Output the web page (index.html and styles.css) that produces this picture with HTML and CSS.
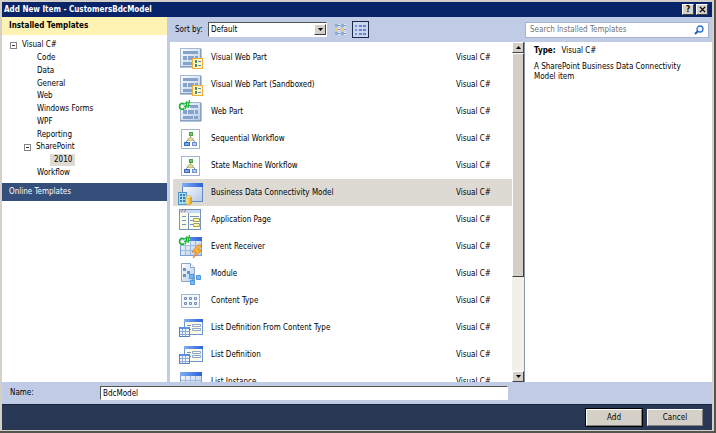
FILE: index.html
```html
<!DOCTYPE html>
<html lang="en">
  <head>
    <meta charset="utf-8">
    <title>Add New Item - CustomersBdcModel</title>
    <link rel="stylesheet" href="styles.css">
  </head>

  <body>
    <svg class="sprite" aria-hidden="true">
      <defs>
        <linearGradient id="pane" x1="0" y1="0" x2="1" y2="1">
          <stop offset="0" stop-color="#ffffff"/>
          <stop offset="1" stop-color="#b4c9e6"/>
        </linearGradient>
        <linearGradient id="bar" x1="0" y1="0" x2="1" y2="0">
          <stop offset="0" stop-color="#82aef5"/>
          <stop offset="1" stop-color="#2a62d8"/>
        </linearGradient>
        <linearGradient id="gold" x1="0" y1="0" x2="1" y2="0">
          <stop offset="0" stop-color="#fff0a0"/>
          <stop offset="1" stop-color="#e8a51c"/>
        </linearGradient>
      </defs>

      <symbol id="form" viewBox="0 0 26 24">
        <rect x="2.5" y="2.5" width="20" height="18" fill="url(#pane)" stroke="#a3b8d3"/>
        <path d="M2 21h21V3" fill="none" stroke="#6a88ac"/>
        <path d="M5 5h15v3H5zM5 10h4v4H5zM10 10h6v4h-6zM17 10h3v4h-3zM5 16h10v3H5zM16 16h4v3h-4z" fill="#86a3cb"/>
      </symbol>
      <symbol id="csharp" viewBox="0 0 26 24">
        <path d="M6.500 4.500C4 2.500 1.500 4 1.500 6.500S4 10 6.500 8.500" fill="none" stroke="#12b52a" stroke-width="1.600"/>
        <path d="M9 1L7.500 9M11.500 0L10 8M6.500 3.500L12.500 2.500M6 6.500L12 5.500" stroke="#12b52a" stroke-width="1.200"/>
      </symbol>
      <symbol id="visual-part" viewBox="0 0 26 24">
        <use href="#form"/>
        <rect x="14.500" y="12.500" width="10" height="10" fill="#fff7cf" stroke="#efae32"/>
        <path d="M17 14h2v3h-2zM17 18h2v3h-2z" fill="#4a8f4f"/>
        <path d="M20 15.500h3M20 19.500h3" stroke="#6482ac"/>
      </symbol>
      <symbol id="web-part" viewBox="0 0 26 24">
        <use href="#form"/>
        <path d="M1 0h11v9H1z" fill="#fff" opacity=".7"/>
        <use href="#csharp"/>
      </symbol>
      <symbol id="workflow" viewBox="0 0 26 24">
        <rect x="3.500" y="2.500" width="18" height="19" fill="#fff" stroke="#9fb4d0"/>
        <path d="M12.500 9v3M8.500 16v-2l4-2 4 2v2" fill="none" stroke="#7c8fa8"/>
        <rect x="11.500" y="5.500" width="3" height="3" fill="#77c961" stroke="#4ba548"/>
        <path d="M12.500 10l3 2-3 2-3-2z" fill="#e6dd80" stroke="#9b9b51" stroke-width=".6"/>
        <rect x="6.500" y="15.500" width="5" height="3" fill="#75a5ef" stroke="#3c68bb"/>
        <rect x="14.500" y="15.500" width="4" height="3" fill="#b9cff5" stroke="#6f8eca"/>
      </symbol>
      <symbol id="bdc" viewBox="0 0 26 24">
        <rect x="4.500" y="2.500" width="20" height="18" fill="url(#pane)" stroke="#6187c8"/>
        <path d="M4 2h21v4H4z" fill="url(#bar)"/>
        <rect x=".500" y="11.500" width="8" height="12" fill="#a9dcf5" stroke="#4c99c9"/>
        <path d="M2 13h2v2H2zM5 13h2v2H5zM2 16h2v2H2zM5 16h2v2H5zM2 19h2v2H2zM5 19h2v2H5z" fill="#377fb7"/>
        <path d="M7.500 16v6c0 2 6 2 6 0v-6" fill="url(#gold)" stroke="#c98d1c" stroke-width=".7"/>
        <ellipse cx="10.500" cy="16" rx="3" ry="1.300" fill="#fff2a9" stroke="#d2982a" stroke-width=".7"/>
      </symbol>
      <symbol id="page" viewBox="0 0 26 24">
        <rect x="1.500" y="1.500" width="21" height="20" fill="#f8fbea" stroke="#7493bf"/>
        <path d="M2 2h20v3H2z" fill="#c6d9f1"/>
        <path d="M3 4l2-2M6 4l2-2" stroke="#d0604d"/>
        <path d="M10.500 5v16M4 8.500h4M4 12.500h4M4 16.500h4M12 8.500h9M12 12.500h4M12 16.500h4" stroke="#7593bc"/>
        <path d="M15.500 10.500h6v3h-6zM15.500 15.500h6v3h-6z" fill="#fff4a2" stroke="#a1a45f"/>
      </symbol>
      <symbol id="table" viewBox="0 0 26 24">
        <rect x="2.500" y="2.500" width="21" height="18" fill="url(#pane)" stroke="#7da0db"/>
        <path d="M2 2h22v4H2z" fill="url(#bar)"/>
        <path d="M7.500 6v14M12.500 6v14M17.500 6v14M3 10.500h20M3 15.500h20" stroke="#9fbae0"/>
      </symbol>
      <symbol id="event" viewBox="0 0 26 24">
        <use href="#table"/>
        <path d="M1 0h11v10H1z" fill="#fff" opacity=".7"/>
        <use href="#csharp"/>
        <path d="M20 10l-6 7h4l-3 6 9-8h-4l4-5z" fill="#ffb82e" stroke="#dc6c18" stroke-width=".7"/>
      </symbol>
      <symbol id="module" viewBox="0 0 26 24">
        <path d="M3.500 1.500h9l4 4v14h-13z" fill="url(#pane)" stroke="#8da7c9"/>
        <path d="M12.500 1.500v4h4" fill="#fff" stroke="#8da7c9"/>
        <path d="M5 6h3v3H5zM9 9h3v3H9zM5 12h3v3H5z" fill="#5b95d9"/>
        <path d="M13 16h4M15 15v4" fill="none" stroke="#4d89c8"/>
        <path d="M11.500 12.500h4v4h-4zM18.500 13.500h4v4h-4zM12.500 18.500h4v4h-4z" fill="#70bdf3" stroke="#4f97dc"/>
      </symbol>
      <symbol id="content-type" viewBox="0 0 26 24">
        <rect x="3.500" y="5.500" width="18" height="13" fill="#f3f7fc" stroke="#a3b6cf"/>
        <path d="M6.500 8.500h2v2h-2zM11.500 8.500h2v2h-2zM16.500 8.500h2v2h-2zM6.500 13.500h2v2h-2zM11.500 13.500h2v2h-2zM16.500 13.500h2v2h-2z" fill="#d5e3f6" stroke="#748eb3"/>
      </symbol>
      <symbol id="list-def" viewBox="0 0 26 24">
        <rect x="6.500" y="3.500" width="18" height="15" fill="#fbfbe4" stroke="#6e95d3"/>
        <path d="M6 3h19v3H6z" fill="url(#bar)"/>
        <path d="M9 9.500h4M9 13.500h4" stroke="#728fb7"/>
        <path d="M14.500 8.500h8v2h-8zM14.500 12.500h8v2h-8z" fill="#fff" stroke="#8ba6c8"/>
        <rect x="1.500" y="11.500" width="10" height="9" fill="#eef5ff" stroke="#5b80bb"/>
        <path d="M2 11h9v2H2z" fill="#5e92e4"/>
        <path d="M4.500 13v7M7.500 13v7M2 15.500h9M2 18.500h9" stroke="#8dabd5"/>
      </symbol>
    </svg>

    <main class="dialog">
      <header class="titlebar">
        <h1>Add New Item - CustomersBdcModel</h1>
        <button class="caption-btn" aria-label="Help">?</button>
        <button class="caption-btn" aria-label="Close"><svg viewBox="0 0 8 8"><path d="M1 1l6 6M7 1L1 7" stroke="#000" stroke-width="1.500"/></svg></button>
      </header>

      <div class="content">
        <nav class="sidebar">
          <h2>Installed Templates</h2>
          <ul class="tree">
            <li><button class="toggle" aria-label="Collapse Visual C#"></button>Visual C#</li>
            <li class="level-2">Code</li>
            <li class="level-2">Data</li>
            <li class="level-2">General</li>
            <li class="level-2">Web</li>
            <li class="level-2">Windows Forms</li>
            <li class="level-2">WPF</li>
            <li class="level-2">Reporting</li>
            <li class="level-1"><button class="toggle" aria-label="Collapse SharePoint"></button>SharePoint</li>
            <li class="level-3"><span class="current">2010</span></li>
            <li class="level-2">Workflow</li>
          </ul>
          <button class="online">Online Templates</button>
        </nav>

        <div class="workspace">
          <div class="toolbar">
            <label for="sort">Sort by:</label>
            <div class="select">
              <select id="sort"><option>Default</option></select>
              <span class="arrow-btn"><svg viewBox="0 0 5 3"><path d="M0 0h5L2.500 3z"/></svg></span>
            </div>
            <button class="view-btn" aria-label="Small icons">
              <svg viewBox="0 0 12 12"><path d="M0 0h3v3H0zM6 0h3v3H6zM0 8h3v3H0zM6 8h3v3H6z" fill="#8caedd"/><path d="M0 4h3v3H0zM6 4h3v3H6z" fill="#efca62"/><path d="M3 0h2v3H3zM3 4h2v3H3zM3 8h2v3H3zM9 0h2v3H9zM9 4h2v3H9zM9 8h2v3H9z" fill="#e9eefa"/><path d="M3 1.500h2M3 5.500h2M3 9.500h2M9 1.500h2M9 5.500h2M9 9.500h2" stroke="#6c8fc5"/></svg>
            </button>
            <button class="view-btn active" aria-label="Medium icons">
              <svg viewBox="0 0 12 12"><path d="M0 1h2v2H0zM0 5h2v2H0zM0 9h2v2H0z" fill="#7194da"/><path d="M4 1h3v2H4zM8 1h3v2H8zM4 5h3v2H4zM8 5h3v2H8zM4 9h3v2H4zM8 9h3v2H8z" fill="#6686c9"/></svg>
            </button>
            <div class="search">
              <input type="text" placeholder="Search Installed Templates" aria-label="Search Installed Templates">
              <svg viewBox="0 0 10 10"><circle cx="6" cy="4" r="3" fill="#eef6ff" stroke="#2d70d2" stroke-width="1.300"/><path d="M4 6L1 9" stroke="#2459b9" stroke-width="2"/></svg>
            </div>
          </div>

          <div class="panes">
            <div class="list-pane">
              <ul class="templates">
                <li><svg><use href="#visual-part"/></svg><span>Visual Web Part</span><span>Visual C#</span></li>
                <li><svg><use href="#visual-part"/></svg><span>Visual Web Part (Sandboxed)</span><span>Visual C#</span></li>
                <li><svg><use href="#web-part"/></svg><span>Web Part</span><span>Visual C#</span></li>
                <li><svg><use href="#workflow"/></svg><span>Sequential Workflow</span><span>Visual C#</span></li>
                <li><svg><use href="#workflow"/></svg><span>State Machine Workflow</span><span>Visual C#</span></li>
                <li class="selected"><svg><use href="#bdc"/></svg><span>Business Data Connectivity Model</span><span>Visual C#</span></li>
                <li><svg><use href="#page"/></svg><span>Application Page</span><span>Visual C#</span></li>
                <li><svg><use href="#event"/></svg><span>Event Receiver</span><span>Visual C#</span></li>
                <li><svg><use href="#module"/></svg><span>Module</span><span>Visual C#</span></li>
                <li><svg><use href="#content-type"/></svg><span>Content Type</span><span>Visual C#</span></li>
                <li><svg><use href="#list-def"/></svg><span>List Definition From Content Type</span><span>Visual C#</span></li>
                <li><svg><use href="#list-def"/></svg><span>List Definition</span><span>Visual C#</span></li>
                <li><svg><use href="#table"/></svg><span>List Instance</span><span>Visual C#</span></li>
              </ul>
              <div class="scrollbar">
                <button class="arrow-btn" aria-label="Scroll up"><svg viewBox="0 0 5 3"><path d="M0 3h5L2.500 0z"/></svg></button>
                <div class="thumb"></div>
                <div class="track"></div>
                <button class="arrow-btn" aria-label="Scroll down"><svg viewBox="0 0 5 3"><path d="M0 0h5L2.500 3z"/></svg></button>
              </div>
            </div>
            <aside class="details">
              <p><strong>Type:</strong>Visual C#</p>
              <p>A SharePoint Business Data Connectivity Model item</p>
            </aside>
          </div>
        </div>
      </div>

      <div class="name-row">
        <label for="name">Name:</label>
        <input id="name" type="text" value="BdcModel" autofocus>
      </div>

      <footer class="actions">
        <button class="default">Add</button>
        <button>Cancel</button>
      </footer>
    </main>
  </body>
</html>
```

FILE: styles.css
```css
* {
  box-sizing: border-box;
}
body {
  margin: 0;
  padding: 0 2px 2px 0;
  background: #55554f;
  font: 8px/12px "DejaVu Sans Condensed", "Open Sans", sans-serif;
  color: #000;
}
h1, h2, p, ul {
  margin: 0;
  padding: 0;
  font-size: inherit;
  list-style: none;
}
button, input, select {
  margin: 0;
  padding: 0;
  font: inherit;
  color: inherit;
}
.sprite {
  position: absolute;
  width: 0;
  height: 0;
}
.dialog {
  display: flex;
  flex-direction: column;
  height: calc(100vh - 2px);
  border: 2px solid #d4d0c8;
  border-bottom-width: 1px;
  background: #c0cce6;
}

/* title bar */
.titlebar {
  display: flex;
  align-items: center;
  gap: 2px;
  height: 15px;
  padding: 0 4px 0 2px;
  background: #0a246a;
  color: #fff;
}
.titlebar h1 {
  flex: 1;
}
.caption-btn,
.arrow-btn {
  display: flex;
  align-items: center;
  justify-content: center;
  width: 12px;
  height: 11px;
  border: 1px solid;
  border-color: #fff #404040 #404040 #fff;
  background: #d4d0c8;
  color: #000;
  font-weight: bold;
}
.caption-btn svg {
  width: 7px;
  height: 7px;
}
.arrow-btn svg {
  width: 5px;
  height: 3px;
}

.content {
  display: flex;
  flex: 1;
  min-height: 0;
}

/* left tree */
.sidebar {
  flex: 0 0 165px;
  background: #fff;
}
.sidebar h2 {
  height: 18px;
  padding: 3px 7px;
  background: #fff3b3;
}
.tree {
  display: flex;
  flex-direction: column;
  height: 144px;
  padding: 4px 0 0 8px;
}
.tree li {
  display: flex;
  flex: 1;
  align-items: center;
  gap: 5px;
}
.tree .level-1 {
  padding-left: 14px;
}
.tree .level-2 {
  padding-left: 27px;
}
.tree .level-3 {
  padding-left: 40px;
}
.toggle {
  width: 7px;
  height: 7px;
  border: 1px solid #848484;
  background: linear-gradient(#333, #333) center / 3px 1px no-repeat #fff;
}
.current {
  padding: 0 3px 0 4px;
  background: #dddad4;
}
.online {
  display: block;
  width: 100%;
  height: 18px;
  margin-top: 4px;
  padding: 0 7px;
  border: 0;
  background: #344f7c;
  color: #fff;
  text-align: left;
}

/* toolbar */
.workspace {
  display: flex;
  flex: 1;
  flex-direction: column;
  min-width: 0;
  padding-left: 3px;
}
.toolbar {
  display: flex;
  align-items: center;
  height: 25px;
  padding: 0 3px 0 5px;
}
.toolbar label {
  width: 33px;
}
.select {
  display: flex;
  align-items: center;
  width: 119px;
  height: 15px;
  margin-right: 5px;
  border: 1px solid;
  border-color: #55554f #fff #fff #55554f;
  background: #fff;
}
.select select {
  flex: 1;
  padding-left: 2px;
  border: 0;
  background: #fff;
  appearance: none;
}
.view-btn {
  display: flex;
  align-items: center;
  justify-content: center;
  width: 17px;
  height: 17px;
  margin-right: 3px;
  border: 0;
  background: none;
}
.view-btn.active {
  border: 1px solid #1c2a48;
  background: #c9d6ee;
}
.view-btn svg {
  flex: none;
  width: 12px;
  height: 12px;
}
.search {
  display: flex;
  align-items: center;
  width: 184px;
  height: 16px;
  margin-left: auto;
  padding: 0 4px;
  border: 1px solid #a5b3d0;
  background: #fff;
}
.search input {
  flex: 1;
  min-width: 0;
  border: 0;
}
.search input::placeholder {
  color: #717171;
}
.search svg {
  width: 10px;
  height: 10px;
}

/* template list */
.panes {
  display: flex;
  flex: 1;
  min-height: 0;
  background: #fff;
}
.list-pane {
  display: flex;
  flex: 0 0 355px;
  border-right: 1px solid #8793ad;
}
.templates {
  flex: 1;
  overflow: hidden;
  padding: 2px 0 0 3px;
}
.templates li {
  display: flex;
  align-items: center;
  height: 27px;
  padding-left: 5px;
}
.templates svg {
  width: 26px;
  height: 24px;
  margin-right: 7px;
}
.templates span {
  flex: 1;
}
.templates span:last-child {
  flex: 0 0 56px;
}
.templates .selected {
  background: #dddad4;
}
.scrollbar {
  display: flex;
  flex-direction: column;
  width: 12px;
  background: #f3f0ea;
}
.thumb {
  flex: 223;
  border: 1px solid;
  border-color: #fff #404040 #404040 #fff;
  background: #d4d0c8;
}
.track {
  flex: 94;
}
.details {
  flex: 1;
  padding: 4px 9px;
}
.details p {
  margin-bottom: 6px;
  line-height: 10px;
}
.details strong {
  margin-right: 6px;
}

/* bottom */
.name-row {
  display: flex;
  align-items: center;
  height: 22px;
  padding-left: 8px;
}
.name-row label {
  flex: 0 0 90px;
}
.name-row input {
  flex: 0 0 408px;
  height: 14px;
  padding: 0 2px;
  border: 1px solid;
  border-color: #55554f #fff #fff #55554f;
  background: #fff;
  outline: 0;
}
.actions {
  display: flex;
  align-items: center;
  justify-content: flex-end;
  gap: 5px;
  height: 26px;
  padding-right: 9px;
  border-top: 1px solid #18243c;
  background: #293955;
}
.actions button {
  width: 56px;
  height: 17px;
  border: 1px solid;
  border-color: #fff #808080 #808080 #fff;
  background: #d4d0c8;
}
.actions .default {
  outline: 1px solid #000;
}
```
